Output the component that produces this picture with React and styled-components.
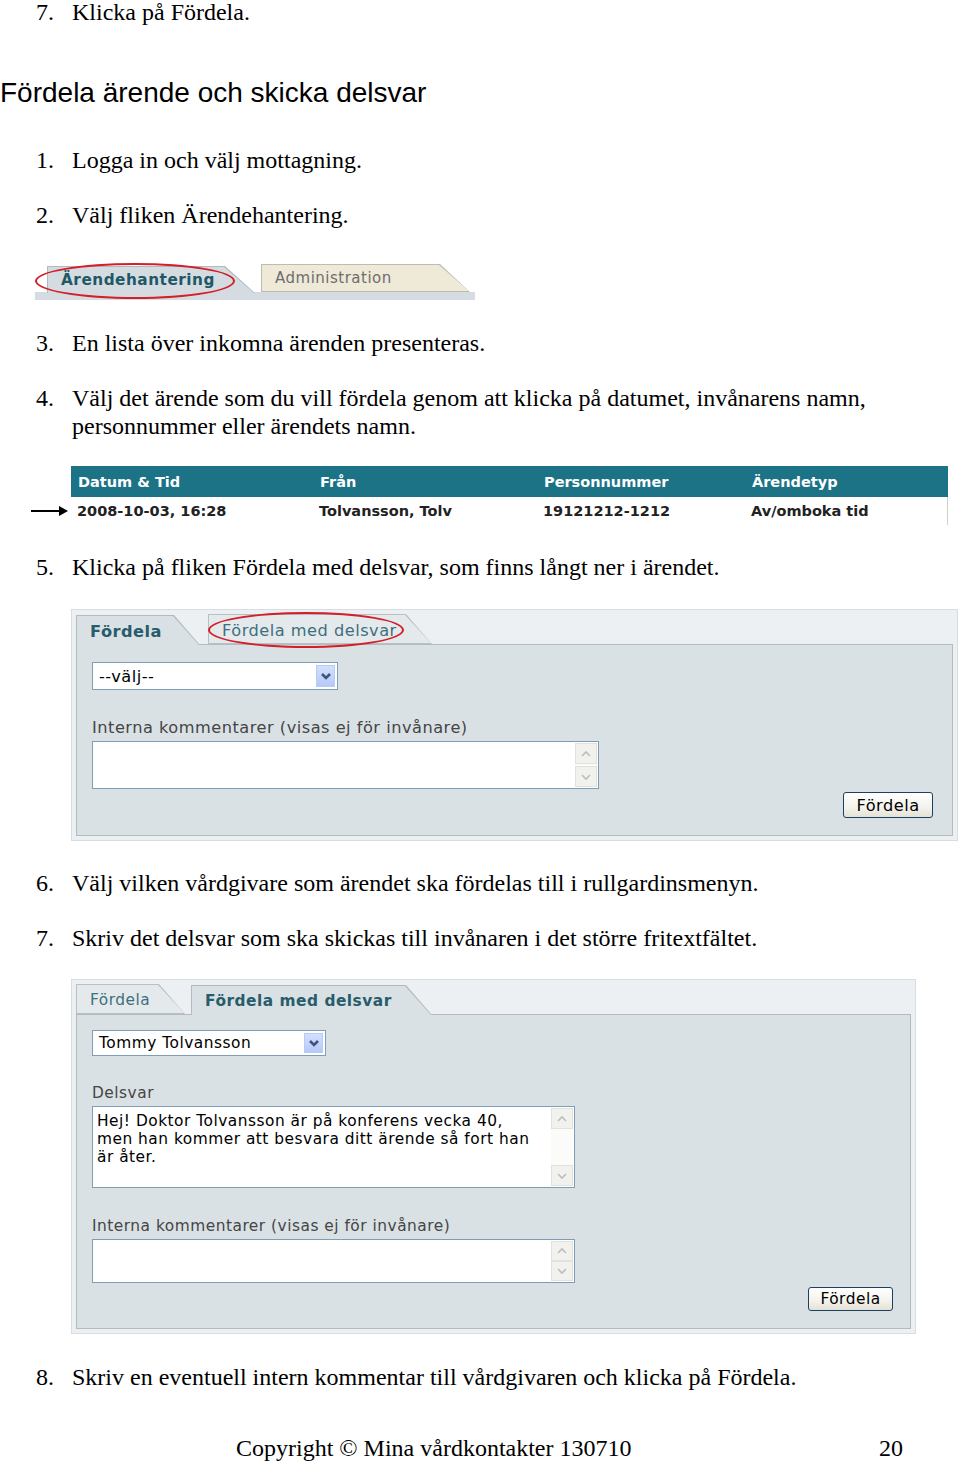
import React from 'react';
import styled, { createGlobalStyle } from 'styled-components';

const GlobalStyle = createGlobalStyle`
  html, body { margin: 0; padding: 0; background: #fff; }
  body { font-family: "Liberation Serif", "Times New Roman", serif; color: #000; }
`;

const UI_FONT = `"DejaVu Sans", Verdana, sans-serif`;

const Page = styled.div`
  display: flow-root;
  width: 960px;
  height: 1461px;
  overflow: hidden;
`;

const Step = styled.div`
  display: flex;
  padding-left: 36px;
  margin-top: ${p => p.$mt ?? 27}px;
  font-size: 24px;
  line-height: 28px;
`;

const Num = styled.span`
  width: 36px;
  flex: none;
`;

const Heading = styled.h2`
  margin: 51px 0 0;
  font: normal 28px/32px "Liberation Sans", Arial, sans-serif;
`;

// slanted tab, border drawn by two clipped layers
const SlantTab = styled.div`
  position: relative;
  z-index: ${p => (p.$active ? 1 : 0)};
  box-sizing: border-box;
  width: ${p => p.$w}px;
  height: ${p => p.$h}px;
  margin-bottom: ${p => (p.$active ? -1 : 0)}px;
  padding: ${p => p.$pt ?? 0}px 0 0 14px;
  display: flex;
  align-items: center;
  font-family: ${UI_FONT};
  font-size: ${p => p.$fs}px;
  letter-spacing: 0.5px;
  font-weight: ${p => (p.$active ? 700 : 400)};
  color: ${p => p.$color};
  white-space: nowrap;

  &::before,
  &::after {
    content: "";
    position: absolute;
    z-index: -1;
    clip-path: polygon(0 0, calc(100% - ${p => p.$slant}px) 0, 100% 100%, 0 100%);
  }
  &::before {
    inset: 0;
    background: ${p => p.$line};
  }
  &::after {
    inset: 1px 1px ${p => (p.$active ? 0 : 1)}px 1px;
    background: ${p => p.$fill};
  }
`;

const Ring = styled.span`
  position: absolute;
  z-index: 3;
  left: ${p => p.$x}px;
  top: ${p => p.$y}px;
  width: ${p => p.$w}px;
  height: ${p => p.$h}px;
  border: 2px solid #d21f2a;
  border-radius: 50%;
  box-sizing: border-box;
  pointer-events: none;
`;

const MainTabs = styled.div`
  position: relative;
  margin: 33px 0 0 35px;
  width: 440px;
  height: 38px;
  box-sizing: border-box;
  padding-left: 12px;
  display: flex;
  align-items: flex-end;
  gap: 6px;
  border-bottom: 8px solid #d5dce1;
`;

const Table = styled.div`
  margin: 26px 0 0 71px;
  width: 877px;
  font-family: ${UI_FONT};
  font-weight: 700;
  font-size: 14.5px;
`;

const HeadRow = styled.div`
  display: grid;
  grid-template-columns: 242px 224px 208px 1fr;
  align-items: center;
  height: 31px;
  padding-left: 7px;
  background: #1b7385;
  color: #fff;
`;

const BodyRow = styled(HeadRow)`
  position: relative;
  height: 28px;
  padding-left: 6px;
  background: #fff;
  color: #222;
  border-right: 1px solid #cfcfcf;
`;

const Pointer = styled.svg`
  position: absolute;
  left: -40px;
  top: 8px;
`;

const Frame = styled.div`
  margin: ${p => p.$mt}px 0 0 71px;
  width: ${p => p.$w}px;
  box-sizing: border-box;
  padding: 4px;
  background: #edf0f2;
  border: 1px solid #d8dde0;
`;

const TabsRow = styled.div`
  display: flex;
  align-items: flex-end;
  gap: ${p => p.$gap}px;
`;

const Panel = styled.div`
  background: #d9e1e5;
  border: 1px solid #b3bbc0;
  padding: ${p => p.$pt}px ${p => p.$pr}px 17px 15px;
  font-family: ${UI_FONT};
  font-size: ${p => p.$fs}px;
  letter-spacing: 0.5px;
  color: #454545;
`;

const Select = styled.div`
  box-sizing: border-box;
  width: ${p => p.$w}px;
  height: ${p => p.$h}px;
  background: #fff;
  border: 1px solid #7f9db9;
  display: flex;
  align-items: center;
  padding-left: 6px;
  color: #000;
`;

const SelectValue = styled.span`
  flex: 1;
  white-space: nowrap;
`;

const DropBtn = styled.span`
  width: 19px;
  height: calc(100% - 4px);
  margin-right: 2px;
  background: linear-gradient(#d3e0fd, #b6c9f7);
  border: 1px solid #b9cbf3;
  box-sizing: border-box;
  display: flex;
  align-items: center;
  justify-content: center;
`;

const Label = styled.div`
  margin-top: ${p => p.$mt}px;
  line-height: 18px;
  white-space: nowrap;
`;

const TextBox = styled.div`
  position: relative;
  box-sizing: border-box;
  margin-top: 4px;
  width: ${p => p.$w}px;
  height: ${p => p.$h}px;
  background: #fff;
  border: 1px solid #7f9db9;
  padding: 5px 30px 0 4px;
  color: #000;
  line-height: 18px;
  display: flex;
`;

const TextBody = styled.div`
  flex: 1;
  white-space: nowrap;
`;

const ScrollCol = styled.div`
  position: absolute;
  right: 1px;
  top: 1px;
  bottom: 1px;
  width: 22px;
  display: flex;
  flex-direction: column;
  justify-content: space-between;
  background: #fbfbfa;
`;

const ScrollArrow = styled.span`
  height: 21px;
  background: #f1f1ee;
  border: 1px solid #e2e2dc;
  box-sizing: border-box;
  display: flex;
  align-items: center;
  justify-content: center;
`;

const ButtonRow = styled.div`
  display: flex;
  justify-content: flex-end;
  margin-top: ${p => p.$mt}px;
`;

const Button = styled.button`
  width: ${p => p.$w}px;
  height: ${p => p.$h}px;
  padding: 0;
  font-family: ${UI_FONT};
  font-size: inherit;
  letter-spacing: inherit;
  color: #000;
  background: linear-gradient(#ffffff, #f3f2ec 60%, #e4e2d6);
  border: 1px solid #1d3f63;
  border-radius: 3px;
`;

const Footer = styled.div`
  display: flex;
  margin-top: 43px;
  padding: 0 57px 0 236px;
  font-size: 24px;
  line-height: 28px;
`;

const PageNo = styled.span`
  margin-left: auto;
`;

const Chevron = ({ up, color = '#bdbdbd', w = 1.6 }) => (
  <svg width="14" height="10" viewBox="0 0 14 10">
    <polyline
      points={up ? '3,7 7,3 11,7' : '3,3 7,7 11,3'}
      fill="none"
      stroke={color}
      strokeWidth={w}
    />
  </svg>
);

const Scroll = () => (
  <ScrollCol>
    <ScrollArrow><Chevron up /></ScrollArrow>
    <ScrollArrow><Chevron /></ScrollArrow>
  </ScrollCol>
);

const Dropdown = ({ value, w, h }) => (
  <Select $w={w} $h={h}>
    <SelectValue>{value}</SelectValue>
    <DropBtn><Chevron color="#3e5480" w={2.6} /></DropBtn>
  </Select>
);

const tabColors = {
  active: { fill: '#d9e1e5', line: '#b3bbc0', color: '#285c6b' },
  idle: { fill: '#e4e9ec', line: '#b8c0c4', color: '#3f6f7d' },
};

const FormTab = ({ active, w, fs, pt, children }) => {
  const c = active ? tabColors.active : tabColors.idle;
  return (
    <SlantTab $active={active} $w={w} $h={30} $pt={pt} $fs={fs} $slant={26} $fill={c.fill} $line={c.line} $color={c.color}>
      {children}
    </SlantTab>
  );
};

const App = () => (
  <Page>
    <GlobalStyle />
    <Step $mt={-2}><Num>7.</Num>Klicka på Fördela.</Step>

    <Heading>Fördela ärende och skicka delsvar</Heading>

    <Step $mt={37}><Num>1.</Num>Logga in och välj mottagning.</Step>
    <Step><Num>2.</Num>Välj fliken Ärendehantering.</Step>

    <MainTabs>
      <SlantTab $active $w={208} $h={27} $fs={15.3} $slant={30} $fill="#d5dce1" $line="#b2babf" $color="#1f5866">
        Ärendehantering
      </SlantTab>
      <SlantTab $w={209} $h={28} $fs={15} $slant={30} $fill="#efe9d7" $line="#bdbcb2" $color="#6e6e6e">
        Administration
      </SlantTab>
      <Ring $x={0} $y={1} $w={200} $h={36} />
    </MainTabs>

    <Step $mt={29}><Num>3.</Num>En lista över inkomna ärenden presenteras.</Step>
    <Step>
      <Num>4.</Num>
      <span>
        Välj det ärende som du vill fördela genom att klicka på datumet, invånarens namn,
        <br />
        personnummer eller ärendets namn.
      </span>
    </Step>

    <Table>
      <HeadRow>
        <span>Datum &amp; Tid</span>
        <span>Från</span>
        <span>Personnummer</span>
        <span>Ärendetyp</span>
      </HeadRow>
      <BodyRow>
        <Pointer width="38" height="12" viewBox="0 0 38 12">
          <line x1="0" y1="6" x2="30" y2="6" stroke="#000" strokeWidth="2" />
          <polygon points="28,1 37,6 28,11" fill="#000" />
        </Pointer>
        <span>2008-10-03, 16:28</span>
        <span>Tolvansson, Tolv</span>
        <span>19121212-1212</span>
        <span>Av/omboka tid</span>
      </BodyRow>
    </Table>

    <Step $mt={28}><Num>5.</Num>Klicka på fliken Fördela med delsvar, som finns långt ner i ärendet.</Step>

    <Frame $mt={28} $w={887}>
      <TabsRow $gap={8}>
        <FormTab active w={124} fs={16.2} pt={3}>Fördela</FormTab>
        <FormTab w={224} fs={16.2} pt={3}>
          Fördela med delsvar
          <Ring $x={0} $y={-2} $w={196} $h={36} />
        </FormTab>
      </TabsRow>
      <Panel $pt={17} $pr={19} $fs={16.2}>
        <Dropdown value="--välj--" w={246} h={28} />
        <Label $mt={29}>Interna kommentarer (visas ej för invånare)</Label>
        <TextBox $w={507} $h={48}>
          <TextBody />
          <Scroll />
        </TextBox>
        <ButtonRow $mt={3}>
          <Button $w={90} $h={26}>Fördela</Button>
        </ButtonRow>
      </Panel>
    </Frame>

    <Step $mt={28}><Num>6.</Num>Välj vilken vårdgivare som ärendet ska fördelas till i rullgardinsmenyn.</Step>
    <Step><Num>7.</Num>Skriv det delsvar som ska skickas till invånaren i det större fritextfältet.</Step>

    <Frame $mt={27} $w={845}>
      <TabsRow $gap={6}>
        <FormTab w={109} fs={15.4} pt={2}>Fördela</FormTab>
        <FormTab active w={241} fs={15.4} pt={2}>Fördela med delsvar</FormTab>
      </TabsRow>
      <Panel $pt={15} $pr={17} $fs={15.4}>
        <Dropdown value="Tommy Tolvansson" w={234} h={26} />
        <Label $mt={28}>Delsvar</Label>
        <TextBox $w={483} $h={82}>
          <TextBody>
            Hej! Doktor Tolvansson är på konferens vecka 40,
            <br />
            men han kommer att besvara ditt ärende så fort han
            <br />
            är åter.
          </TextBody>
          <Scroll />
        </TextBox>
        <Label $mt={29}>Interna kommentarer (visas ej för invånare)</Label>
        <TextBox $w={483} $h={44}>
          <TextBody />
          <Scroll />
        </TextBox>
        <ButtonRow $mt={4}>
          <Button $w={85} $h={24}>Fördela</Button>
        </ButtonRow>
      </Panel>
    </Frame>

    <Step $mt={29}><Num>8.</Num>Skriv en eventuell intern kommentar till vårdgivaren och klicka på Fördela.</Step>

    <Footer>
      <span>Copyright © Mina vårdkontakter 130710</span>
      <PageNo>20</PageNo>
    </Footer>
  </Page>
);

export default App;
